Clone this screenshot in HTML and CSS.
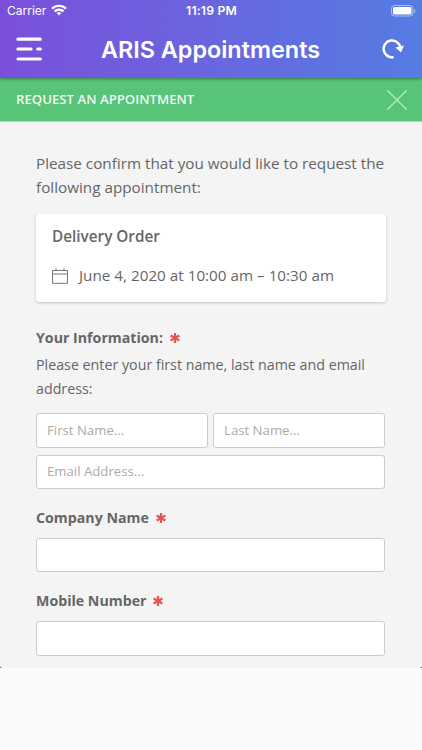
FILE: index.html
```html
<!DOCTYPE html>
<html lang="en">
<head>
    <meta charset="UTF-8">
    <meta name="viewport" content="width=device-width, initial-scale=1.0">
    <title>ARIS Appointments</title>
    <link rel="stylesheet" href="styles.css">
</head>
<body>
    <div class="screen">
        <header class="header">
            <div class="statusbar">
                <div class="carrier">
                    <span>Carrier</span>
                    <svg class="wifi" width="16" height="12" viewBox="0 0 16 12" fill="none" stroke="#fff" stroke-width="2.2">
                        <path d="M1 4.6a10 10 0 0 1 14 0M3.5 7.4a6.4 6.4 0 0 1 9 0"/>
                        <path d="M8 11.4L5.7 9.1a3.3 3.3 0 0 1 4.6 0z" fill="#fff" stroke="none"/>
                    </svg>
                </div>
                <div class="time">11:19 PM</div>
                <div class="power">
                    <svg class="battery" width="25" height="12" viewBox="0 0 25 12">
                        <rect x=".5" y=".5" width="21.5" height="10.5" rx="3" fill="none" stroke="#fff" stroke-opacity=".5"/>
                        <rect x="2" y="2" width="18.5" height="7.5" rx="1.6" fill="#fff"/>
                        <path d="M23.2 4v4q1.3-.7 1.3-2t-1.3-2z" fill="#fff" fill-opacity=".5"/>
                    </svg>
                </div>
            </div>
            <div class="navbar">
                <svg class="menu" width="26" height="24" viewBox="0 0 26 24" stroke="#fff" stroke-width="3.2" stroke-linecap="round">
                    <path d="M2 2.2h22.3M2 12H15M21.8 12h2.5M2 22h22.3"/>
                </svg>
                <h1>ARIS Appointments</h1>
                <svg class="refresh" width="22" height="20" viewBox="0 0 22 20">
                    <path d="M11.7 18.1A8.4 8.4 0 1 1 18.3 8.5" fill="none" stroke="#fff" stroke-width="2.5"/>
                    <path d="M13.4 8.6L22 6.6 19 13.4z" fill="#fff"/>
                </svg>
            </div>
        </header>

        <div class="titlebar">
            <span>REQUEST AN APPOINTMENT</span>
            <svg width="20" height="20" viewBox="0 0 20 20" stroke="#b9e8c6" stroke-width="1.3">
                <path d="M.3.3l19.4 19.4M19.7.3L.3 19.7"/>
            </svg>
        </div>

        <form class="content">
            <p class="intro">Please confirm that you would like to request the following appointment:</p>

            <div class="card">
                <div class="card-title">Delivery Order</div>
                <div class="card-date">
                    <svg width="16" height="16" viewBox="0 0 16 16" fill="none" stroke="#777">
                        <path d="M.5 2.5h15v12.8H.5zM.5 6h15M4 .2v2.3M12 .2v2.3"/>
                    </svg>
                    <span>June 4, 2020 at 10:00 am – 10:30 am</span>
                </div>
            </div>

            <div class="label">Your Information:
                <svg class="required" viewBox="0 0 10 10"><path d="M5 0v10M.6 2.5l8.8 5M9.4 2.5l-8.8 5"/></svg>
            </div>
            <p class="hint">Please enter your first name, last name and email address:</p>
            <div class="row">
                <input type="text" placeholder="First Name...">
                <input type="text" placeholder="Last Name...">
            </div>
            <input class="email" type="text" placeholder="Email Address...">

            <div class="label">Company Name
                <svg class="required" viewBox="0 0 10 10"><path d="M5 0v10M.6 2.5l8.8 5M9.4 2.5l-8.8 5"/></svg>
            </div>
            <input type="text">

            <div class="label">Mobile Number
                <svg class="required" viewBox="0 0 10 10"><path d="M5 0v10M.6 2.5l8.8 5M9.4 2.5l-8.8 5"/></svg>
            </div>
            <input type="text">
        </form>
    </div>
</body>
</html>
```
FILE: styles.css
```css
* { box-sizing: border-box; }
body { margin: 0; background: linear-gradient(#333 668px, #fafafa 668px); height: 750px; overflow: hidden; font-family: "Open Sans", sans-serif; color: #666; }
.screen { height: 668px; background: #f4f4f4; border-radius: 0 0 2px 2px; overflow: hidden; }

.header { position: relative; height: 78px; background: linear-gradient(92deg, #7c4fdb, #6b64de 45%, #557ce2); color: #fff; box-shadow: 0 1px 3px rgba(0, 0, 0, .4); }
.statusbar { display: flex; height: 22px; padding: 0 6px 0 7px; font: 12px/22px Inter, sans-serif; }
.carrier { display: flex; flex: 1; gap: 5px; }
.wifi { margin-top: 4px; }
.time { font-weight: 600; font-size: 12.2px; letter-spacing: .2px; }
.power { display: flex; flex: 1; justify-content: flex-end; }
.battery { margin-top: 5px; }
.navbar { display: flex; align-items: center; justify-content: space-between; height: 54px; padding: 0 18px 0 16px; }
.navbar h1 { margin: 0 3px 0 0; font: 600 23.4px Inter, sans-serif; }

.titlebar { display: flex; align-items: center; justify-content: space-between; height: 44px; padding: 0 15px 0 16px; background: #57c478; border-bottom: 1px solid #a4dfb5; color: rgba(255, 255, 255, .92); font-size: 13.2px; font-weight: 600; }
.titlebar span { margin-top: -2px; }

.content { padding: 29px 37px 0 36px; }
.intro { margin: 0 -10px 15px 0; font-size: 15.25px; line-height: 24px; }
.card { height: 88px; margin-right: -1px; padding: 10px 16px; background: #fff; border-radius: 3px; box-shadow: 0 1px 3px rgba(0, 0, 0, .2); }
.card-title { font-size: 15.3px; font-weight: 600; line-height: 24px; }
.card-date { display: flex; align-items: center; gap: 11px; margin-top: 16px; font-size: 15.25px; line-height: 24px; }
.card-date span { margin-top: -1px; }

.label { margin-top: 16.5px; font-size: 14.2px; font-weight: 700; line-height: 24px; }
.card + .label { margin-top: 24px; }
.required { width: 10px; height: 10px; margin-left: 3px; stroke: #e05555; stroke-width: 2.3; }
.hint { margin: 3px -10px 12px 0; font-size: 14.25px; line-height: 24px; }
.row { display: flex; gap: 5px; margin-bottom: 7px; }
input { display: block; width: 100%; min-width: 0; height: 34.5px; margin: 8.4px 0 0; padding: 0 10px 1px; background: #fff; border: 1px solid #ccc; border-radius: 3px; font: 13.2px "Open Sans", sans-serif; }
.row input, .email { margin: 0; }
input::placeholder { color: #aaa; }
```
